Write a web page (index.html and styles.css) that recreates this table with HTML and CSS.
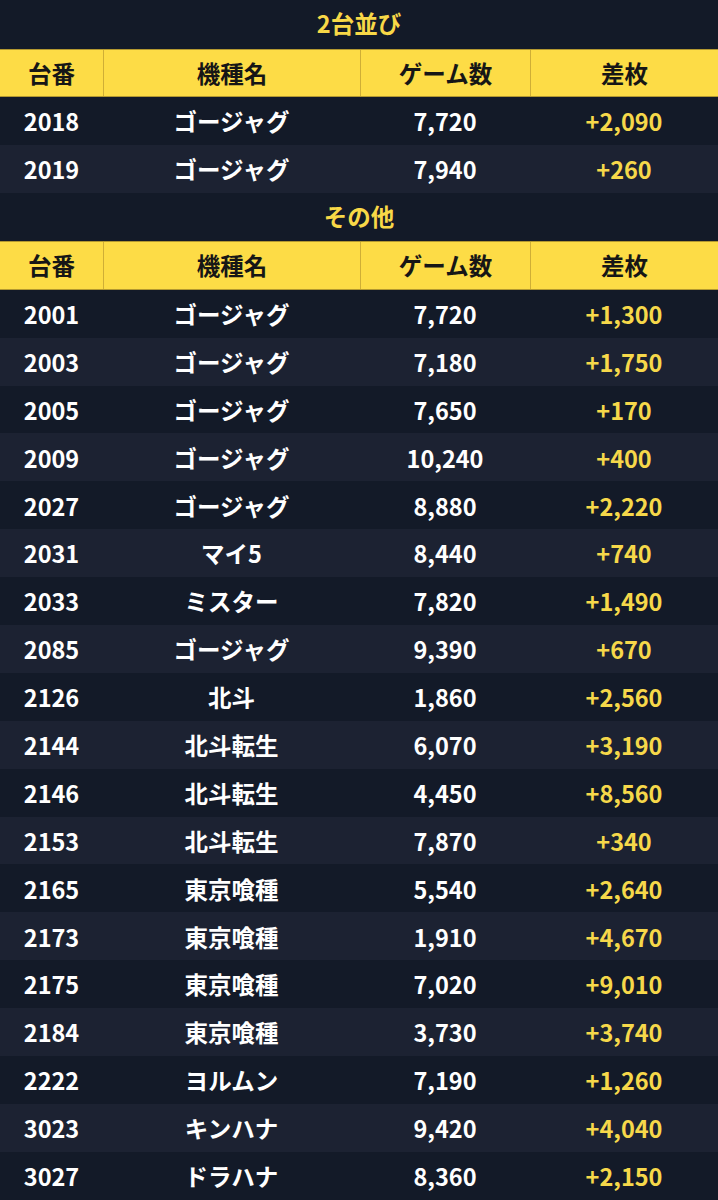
FILE: index.html
```html
<!DOCTYPE html>
<html lang="ja">
<head>
<meta charset="utf-8">
<title>2台並び</title>
<link rel="stylesheet" href="styles.css">
</head>
<body>
<section class="block">
  <h2 class="title">2台並び</h2>
  <div class="row head"><div>台番</div><div>機種名</div><div>ゲーム数</div><div>差枚</div></div>
  <div class="row"><div>2018</div><div>ゴージャグ</div><div>7,720</div><div class="diff">+2,090</div></div>
  <div class="row alt"><div>2019</div><div>ゴージャグ</div><div>7,940</div><div class="diff">+260</div></div>
</section>
<section class="block">
  <h2 class="title">その他</h2>
  <div class="row head"><div>台番</div><div>機種名</div><div>ゲーム数</div><div>差枚</div></div>
  <div class="row"><div>2001</div><div>ゴージャグ</div><div>7,720</div><div class="diff">+1,300</div></div>
  <div class="row alt"><div>2003</div><div>ゴージャグ</div><div>7,180</div><div class="diff">+1,750</div></div>
  <div class="row"><div>2005</div><div>ゴージャグ</div><div>7,650</div><div class="diff">+170</div></div>
  <div class="row alt"><div>2009</div><div>ゴージャグ</div><div>10,240</div><div class="diff">+400</div></div>
  <div class="row"><div>2027</div><div>ゴージャグ</div><div>8,880</div><div class="diff">+2,220</div></div>
  <div class="row alt"><div>2031</div><div>マイ5</div><div>8,440</div><div class="diff">+740</div></div>
  <div class="row"><div>2033</div><div>ミスター</div><div>7,820</div><div class="diff">+1,490</div></div>
  <div class="row alt"><div>2085</div><div>ゴージャグ</div><div>9,390</div><div class="diff">+670</div></div>
  <div class="row"><div>2126</div><div>北斗</div><div>1,860</div><div class="diff">+2,560</div></div>
  <div class="row alt"><div>2144</div><div>北斗転生</div><div>6,070</div><div class="diff">+3,190</div></div>
  <div class="row"><div>2146</div><div>北斗転生</div><div>4,450</div><div class="diff">+8,560</div></div>
  <div class="row alt"><div>2153</div><div>北斗転生</div><div>7,870</div><div class="diff">+340</div></div>
  <div class="row"><div>2165</div><div>東京喰種</div><div>5,540</div><div class="diff">+2,640</div></div>
  <div class="row alt"><div>2173</div><div>東京喰種</div><div>1,910</div><div class="diff">+4,670</div></div>
  <div class="row"><div>2175</div><div>東京喰種</div><div>7,020</div><div class="diff">+9,010</div></div>
  <div class="row alt"><div>2184</div><div>東京喰種</div><div>3,730</div><div class="diff">+3,740</div></div>
  <div class="row"><div>2222</div><div>ヨルムン</div><div>7,190</div><div class="diff">+1,260</div></div>
  <div class="row alt"><div>3023</div><div>キンハナ</div><div>9,420</div><div class="diff">+4,040</div></div>
  <div class="row"><div>3027</div><div>ドラハナ</div><div>8,360</div><div class="diff">+2,150</div></div>
</section>
</body>
</html>
```

FILE: styles.css
```css
html, body {
  margin: 0;
  padding: 0;
  background: #131a28;
}
body {
  font-family: "Noto Sans CJK JP", "Noto Sans", sans-serif;
  font-weight: 700;
  font-size: 23.5px;
  color: #ffffff;
  width: 718px;
}
.title {
  margin: 0;
  height: 48.5px;
  display: flex;
  align-items: center;
  justify-content: center;
  font-size: 23.5px;
  font-weight: 700;
  color: #f8d847;
  padding-bottom: 2px;
  box-sizing: border-box;
}
.row {
  display: grid;
  grid-template-columns: 103px 257px 170px 188px;
  height: 47.9px;
  background: #131a28;
}
.row.alt {
  background: #1c2232;
}
.row > div {
  display: flex;
  align-items: center;
  justify-content: center;
  line-height: 1;
  padding-top: 2px;
}
.row.head {
  height: 48.5px;
  box-sizing: border-box;
  background: #fddc46;
  color: #161616;
  border-top: 1px solid #b39830;
  border-bottom: 1px solid #b39830;
}
.row.head > div {
  padding-top: 1px;
}
.row.head > div + div {
  border-left: 1px solid #cfae36;
}
.diff {
  color: #f6d84a;
}
```
